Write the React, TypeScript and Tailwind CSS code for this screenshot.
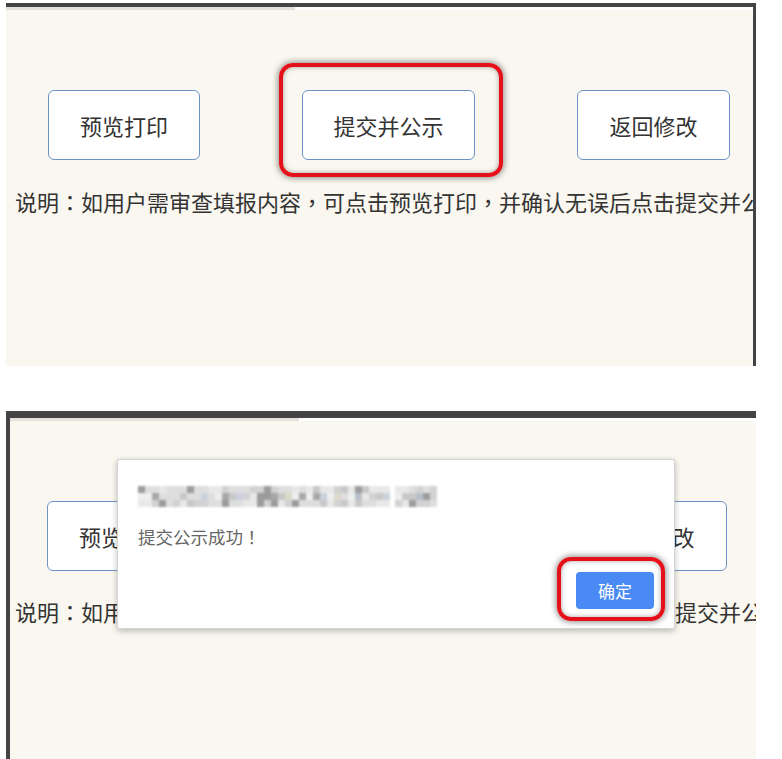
import React from "react";

// mosaic that stands in for the blurred host name in the alert title
const mosaic = (() => {
  const tones = ["#e8e8e8", "#dedede", "#d2d2d2", "#c8c8c8", "#b9bfca", "#a8a8a8", "#ddd8cb", "#cbd2dd", "#9c9c9c", "#efefef"];
  let seed = 17;
  const rnd = () => {
    seed = (seed * 9301 + 49297) % 233280;
    return seed / 233280;
  };
  const cells: { x: number; y: number; c: string }[] = [];
  const segments = [
    [0, 250],
    [257, 299],
  ];
  for (const [from, to] of segments) {
    for (let x = from; x < to; x += 7) {
      for (let row = 0; row < 3; row++) {
        const r = rnd();
        const pick = row === 1 ? Math.floor(r * tones.length) : Math.floor(r * 4) + (r > 0.85 ? 5 : 0);
        cells.push({ x, y: row * 7 + 1, c: tones[pick % tones.length] });
      }
    }
  }
  return cells;
})();

// centred full-width punctuation, as the original page shows it
function P({ children }: { children: string }) {
  return <span className="font-['Noto_Sans_CJK_TC',sans-serif]">{children}</span>;
}

function PageButton({ label, width }: { label: string; width: number }) {
  return (
    <div
      className="flex h-[70px] items-center justify-center rounded-[6px] border-[1.5px] border-[#6d93c5] bg-white text-[22px] text-[#333]"
      style={{ width }}
    >
      {label}
    </div>
  );
}

function Highlight({ className }: { className: string }) {
  return (
    <span
      className={`pointer-events-none absolute rounded-[14px] border-4 border-[#e5101a] shadow-[0_0_6px_1px_rgba(0,0,0,0.45),inset_0_0_5px_rgba(0,0,0,0.35)] ${className}`}
    />
  );
}

function Actions({ gap, pad, ring }: { gap: number; pad: number; ring?: boolean }) {
  return (
    <div className="mt-[80px] flex" style={{ paddingLeft: pad, gap }}>
      <PageButton label="预览打印" width={152} />
      <div className="relative">
        <PageButton label="提交并公示" width={173} />
        {ring && <Highlight className="-left-[23px] -right-[28px] -top-[27px] -bottom-[17px]" />}
      </div>
      <PageButton label="返回修改" width={153} />
    </div>
  );
}

function Note({ pad, mt }: { pad: number; mt: number }) {
  return (
    <p
      className="whitespace-nowrap text-[22px] leading-[32px] text-[#333]"
      style={{ paddingLeft: pad, marginTop: mt }}
    >
      说明<P>：</P>如用户需审查填报内容<P>，</P>可点击预览打印<P>，</P>并确认无误后点击提交并公示<P>。</P>
    </p>
  );
}

function Strip() {
  return (
    <div className="flex h-[3px] shrink-0">
      <div className="w-[289px] bg-[#e4e1da]" />
      <div className="flex-1 bg-white" />
    </div>
  );
}

function AlertBox() {
  return (
    <div className="absolute left-[107px] top-[41px] flex h-[170px] w-[558px] flex-col rounded-[2px] border border-[#d4d4d4] bg-white px-[20px] pt-[25px] shadow-[0_2px_6px_rgba(0,0,0,0.25)]">
      <svg width="300" height="22" viewBox="0 0 300 22" className="shrink-0 blur-[1px]">
        {mosaic.map((m, i) => (
          <rect key={i} x={m.x} y={m.y} width="7" height="7" fill={m.c} />
        ))}
      </svg>
      <p className="mt-[18px] text-[17.5px] leading-[24px] text-[#666]">
        提交公示成功<P>！</P>
      </p>
      <div className="mt-[23px] flex justify-end">
        <div className="relative">
          <button className="flex h-[37px] w-[78px] items-center justify-center rounded-[4px] bg-[#4a8af4] text-[17px] text-white">
            确定
          </button>
          <Highlight className="-left-[19px] -right-[11px] -top-[15px] -bottom-[12px]" />
        </div>
      </div>
    </div>
  );
}

export default function App() {
  return (
    <div className="h-[759px] w-[782px] overflow-hidden bg-white pl-[6px] pt-[3px] font-['Noto_Sans_CJK_SC','Noto_Sans',sans-serif]">
      {/* before submitting */}
      <div className="flex h-[363px] w-[750px] flex-col overflow-hidden border-r-[3px] border-t-4 border-[#444] bg-[#f9f7ef]">
        <Strip />
        <Actions pad={42} gap={102} ring />
        <Note pad={9} mt={25} />
      </div>

      {/* after submitting: browser alert */}
      <div className="relative mt-[45px] flex h-[360px] w-[750px] flex-col border-l-4 border-t-[7px] border-[#444] bg-[#f9f7ef]">
        <Strip />
        <div className="overflow-hidden">
          <Actions pad={37} gap={101} />
          <Note pad={5} mt={24} />
        </div>
        <AlertBox />
      </div>
    </div>
  );
}
